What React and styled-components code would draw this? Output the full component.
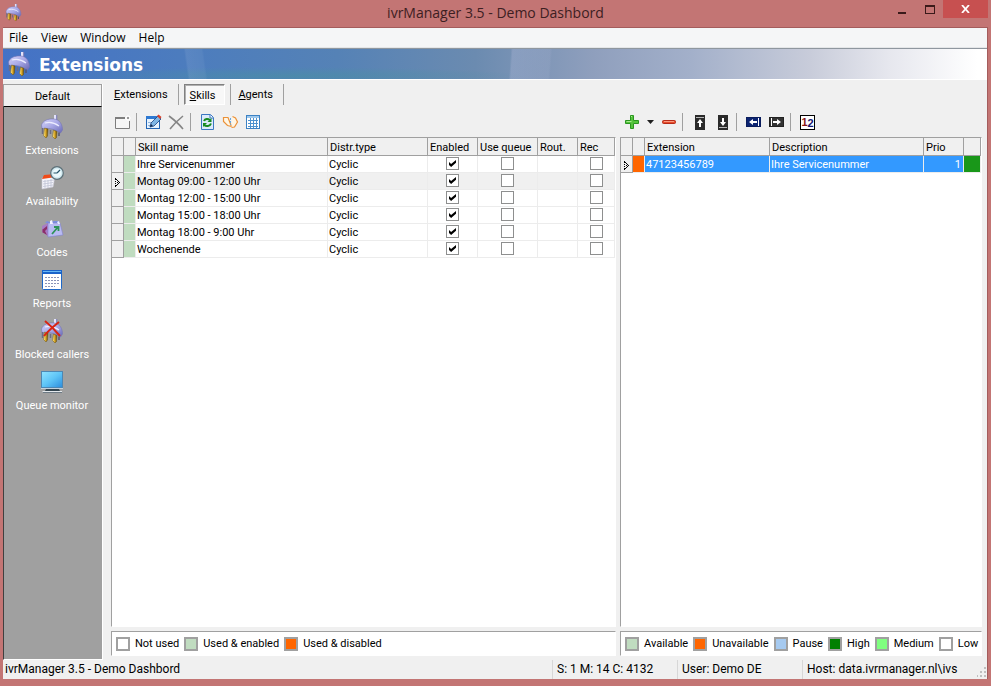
import React, { useState } from "react";
import styled, { createGlobalStyle, css } from "styled-components";

const GlobalStyle = createGlobalStyle`
  *,
  *::before {
    box-sizing: border-box;
  }

  body {
    margin: 0;
    font-family: Roboto, "Noto Sans", sans-serif;
    font-size: 11px;
    line-height: 14px;
    color: #000;
    background: #c37574;
  }

  button {
    padding: 0;
    border: none;
    background: none;
    font: inherit;
    color: inherit;
  }

  svg {
    display: block;
  }
`;

/* ---------- window frame ---------- */

const Window = styled.div`
  display: flex;
  flex-direction: column;
  min-height: 100vh;
  padding: 0 3px 7px;
`;

const TitleBar = styled.header`
  display: grid;
  grid-template-columns: 1fr auto 1fr;
  height: 28px;
  border-bottom: 1px solid #a45c5c;

  > svg {
    margin: 4px 2px;
  }
`;

const Title = styled.h1`
  margin: 0;
  font-family: "Open Sans", "Noto Sans", sans-serif;
  font-size: 14px;
  font-weight: 400;
  line-height: 26px;
  color: #3d2022;
`;

const WindowButtons = styled.div`
  display: flex;
  justify-content: flex-end;
`;

const WindowButton = styled.button`
  display: grid;
  place-items: center;
  width: ${(props) => (props.$close ? "45px" : "27px")};
  height: 18px;
  background: ${(props) => (props.$close ? "#c75050" : "none")};
`;

const Client = styled.div`
  flex: 1;
  display: flex;
  flex-direction: column;
  background: #f0f0f0;
  border-right: 1px solid #a45c5c;
`;

const MenuBar = styled.nav`
  display: flex;
  height: 20px;
  background: #f5f6f7;
  border-bottom: 1px solid #e4e6e8;
`;

const MenuButton = styled.button`
  padding: 1px 7px 0 6px;
  font-family: "Open Sans", "Noto Sans", sans-serif;
  font-size: 12px;
`;

const Banner = styled.div`
  display: flex;
  align-items: center;
  gap: 8px;
  height: 32px;
  padding-left: 4px;
  border-top: 1px solid #8f979f;
  border-bottom: 1px solid #fff;
  color: #fff;
  background:
    linear-gradient(82deg, transparent 18.7%, rgba(255, 255, 255, 0.08) 18.9%, rgba(255, 255, 255, 0.05) 20.5%, transparent 20.7%),
    linear-gradient(94deg, transparent 51.5%, rgba(205, 205, 235, 0.22) 51.7%, rgba(205, 205, 235, 0.1) 55.5%, transparent 55.7%),
    radial-gradient(ellipse at 29% 90%, rgba(72, 146, 160, 0.55), transparent 24%),
    linear-gradient(90deg, #4472c6 0%, #4d7dbd 20%, #5582b6 34%, #6b8bb0 48%, #8f9fbd 60%, #a3b0ca 70%, #c8ccda 82%, #e6e7ee 90%, #fff 99%);
`;

const BannerTitle = styled.h2`
  margin: 0;
  padding-top: 2px;
  font-family: "DejaVu Sans", Verdana, sans-serif;
  font-size: 17px;
  line-height: 24px;
`;

const Workspace = styled.div`
  flex: 1;
  display: flex;
  padding-top: 4px;
`;

/* ---------- sidebar ---------- */

const Sidebar = styled.aside`
  display: flex;
  flex-direction: column;
  flex: 0 0 100px;
  border-right: 1px solid #fff;
`;

const GroupButton = styled.button`
  height: 23px;
  padding-top: 2px;
  border: 1px solid #a0a0a0;
  border-bottom-color: #000;
  background: #f0f0f0;
`;

const SidebarItems = styled.nav`
  flex: 1;
  display: flex;
  flex-direction: column;
  gap: 8px;
  padding: 8px 2px 0 0;
  border-left: 1px solid #404040;
  border-bottom: 1px solid #fff;
  background: #a0a0a0;
`;

const SidebarButton = styled.button`
  display: flex;
  flex-direction: column;
  align-items: center;
  gap: 5px;
  color: #fff;
`;

/* ---------- main area ---------- */

const Main = styled.main`
  flex: 1;
  min-width: 0;
  display: flex;
  flex-direction: column;
  padding: 0 5px 4px 4px;
`;

const Tabs = styled.div`
  display: flex;
  height: 21px;
`;

const TabCell = styled.div`
  padding: 0 5px;
  border-right: 1px solid #a0a0a0;
`;

const Tab = styled.button`
  height: 21px;
  padding: 1px 5px 0 2px;

  ${(props) =>
    props.$active &&
    css`
      padding: 2px 9px 0 5px;
      border: 1px solid #fff;
      border-top-color: #808080;
      border-left-color: #808080;
      background: #f8f8f8;
      box-shadow: inset 1px 1px 0 #b0b0b0;
    `}
`;

const Panels = styled.div`
  flex: 1;
  display: grid;
  grid-template-columns: 505fr 362fr;
  gap: 4px;
  padding-left: 4px;
`;

const Panel = styled.section`
  display: flex;
  flex-direction: column;
  min-width: 0;
`;

const Toolbar = styled.div`
  display: flex;
  align-items: center;
  height: 32px;
  padding-top: 2px;
`;

const ToolButton = styled.button`
  display: grid;
  place-items: center;
  width: ${(props) => (props.$narrow ? "14px" : "23px")};
  height: 22px;
`;

const Separator = styled.span`
  width: 8px;
  height: 18px;
  border-left: 2px solid #f0f0f0;
  background: linear-gradient(90deg, #a0a0a0 1px, transparent 1px);
  background-clip: padding-box;
`;

const GridBox = styled.div`
  flex: 1;
  border: 1px solid #a0a0a0;
  border-right-color: #fff;
  border-bottom-color: #fff;
  background: #fff;
`;

const Grid = styled.table`
  width: 100%;
  table-layout: fixed;
  border-collapse: separate;
  border-spacing: 0;
`;

const Col = styled.col`
  width: ${(props) => (props.$width ? `${props.$width}px` : "auto")};
`;

const HeadCell = styled.th`
  height: 18px;
  padding: 2px 0 0 2px;
  border-right: 1px solid #a0a0a0;
  border-bottom: 1px solid #a0a0a0;
  background: #f0f0f0;
  font-weight: 400;
  text-align: left;
  white-space: nowrap;
`;

const Cell = styled.td`
  height: 17px;
  padding: 2px 2px 0 1px;
  border-right: 1px solid #ececec;
  border-bottom: 1px solid #ececec;
  text-align: ${(props) => props.$align || "left"};
  white-space: nowrap;
  overflow: hidden;
`;

const CheckCell = styled(Cell)`
  padding: 1px 1px 2px;
`;

const Row = styled.tr`
  background: ${(props) => (props.$selected ? "#3399ff" : props.$current ? "#f0f0f0" : "#fff")};
  color: ${(props) => (props.$selected ? "#fff" : "#000")};
`;

const IndicatorCell = styled(Cell)`
  padding-left: 2px;
  border-color: #a0a0a0;
  background: #f0f0f0;
`;

const ColorCell = styled(Cell)`
  background: ${(props) => props.$color};
`;

const Check = styled.input`
  appearance: none;
  display: block;
  width: 13px;
  height: 13px;
  margin: 0 auto;
  border: 1px solid #8e8f8f;
  background: #fff;

  &:checked::before {
    content: "";
    display: block;
    width: 7px;
    height: 7px;
    margin: 2px;
    background: #000;
    clip-path: polygon(0 30%, 30% 58%, 100% 0, 100% 38%, 30% 100%, 0 70%);
  }
`;

const Legend = styled.div`
  display: flex;
  align-items: center;
  gap: 5px;
  height: 25px;
  margin-top: 4px;
  padding-left: 4px;
  border: 1px solid #a0a0a0;
  border-right-color: #fff;
  border-bottom-color: #fff;
  background: #fff;
`;

const LegendItem = styled.span`
  display: flex;
  align-items: center;
  gap: 5px;
  white-space: nowrap;

  &::before {
    content: "";
    width: 14px;
    height: 14px;
    border: 2px solid #a0a0a0;
    background: ${(props) => props.$color};
  }
`;

const StatusBar = styled.footer`
  display: flex;
  height: 19px;
  font-size: 12px;
  line-height: 20px;
`;

const StatusCell = styled.span`
  flex: ${(props) => (props.$width ? `0 0 ${props.$width}px` : "1")};
  display: flex;
  justify-content: space-between;
  align-items: flex-end;
  padding-left: ${(props) => (props.$width ? "4px" : "2px")};
  border-left: ${(props) => (props.$width ? "1px solid #d7d7d7" : "none")};
  white-space: nowrap;
`;

/* ---------- icons ---------- */

const PlugIcon = ({ size = 24, blocked }) => (
  <svg width={size} height={size} viewBox="0 0 24 24">
    <defs>
      <linearGradient id="dome" x1="0" y1="0" x2="1" y2="1">
        <stop offset="0" stopColor="#d4d4fb" />
        <stop offset="0.5" stopColor="#a9a9e6" />
        <stop offset="1" stopColor="#6868b4" />
      </linearGradient>
      <linearGradient id="prong">
        <stop offset="0" stopColor="#fff0a0" />
        <stop offset="0.5" stopColor="#d9a520" />
        <stop offset="1" stopColor="#5e480c" />
      </linearGradient>
    </defs>
    <path d="M14 0h3v6h-3z" fill="#e4e4fa" />
    <path d="M16.2 0h1v6h-1z" fill="#7474b0" />
    <path d="M1.5 10C3 5.500 8 3.500 14 4c6 .5 8.500 6 8.500 11l-2 3c-4-2-7-4-12-4.500-3-.3-5 .5-6.500 0z" fill="url(#dome)" stroke="#7373b5" strokeWidth="0.6" />
    <path d="M5 8c5-1.500 10 0 14 3" fill="none" stroke="#ececff" strokeWidth="1.2" />
    <path d="M2.500 13v6" stroke="#6c6c84" strokeWidth="1.5" />
    <path d="M4.500 13l3.500 1-.5 7-1.500 2-2.500-2.500z" fill="url(#prong)" stroke="#6b5418" strokeWidth="0.5" />
    <path d="M10.500 15v4" stroke="#6c6c84" strokeWidth="1.5" />
    <path d="M13.500 15l3.500 1.500-.5 6-1.500 1.500-2.500-2.500z" fill="url(#prong)" stroke="#6b5418" strokeWidth="0.5" />
    <path d="M19 17.500v3.500" stroke="#55556e" strokeWidth="1.5" />
    {blocked && <path d="M5 2c5 4 10 9 15 15M19 3C14 7 8 12 4 17" fill="none" stroke="#d82414" strokeWidth="2" />}
  </svg>
);

const AvailabilityIcon = () => (
  <svg width="24" height="24" viewBox="0 0 24 24">
    <path d="M2 12l13-2-2 11-11 2z" fill="#f5f5fb" stroke="#c9c9d6" strokeWidth="0.6" />
    <path d="M4 9l11-1 1 3-14 2z" fill="#f04a18" />
    <path d="M3 15.500l11-1.500M3 18l10-1.500M3 20.500l10-1.500M5 14v8M8 14v8M11 13v8" stroke="#b9bdd0" strokeWidth="0.7" />
    <circle cx="17" cy="7" r="6.3" fill="#cfe8ef" stroke="#5d7078" strokeWidth="1.2" />
    <circle cx="17" cy="7" r="4.3" fill="#eaf8fb" />
    <path d="M17 7l3-3M17 7h-3.500" stroke="#27566b" strokeWidth="1.2" />
  </svg>
);

const CodesIcon = () => (
  <svg width="24" height="24" viewBox="0 0 24 24">
    <path d="M5 6l2-2 3 1 4-1h5l1 3z" fill="#7b8ee0" />
    <path d="M2 9l6-3v13l-6-4z" fill="#a87cc4" />
    <path d="M8 6h12l3 12-15 2z" fill="#b9bbf2" stroke="#7f82cc" strokeWidth="0.6" />
    <path d="M10 4l2-1 1 4h-3z" fill="#f2f2ff" />
    <path d="M17 5l2-1 1 3h-2z" fill="#e8ecff" />
    <path d="M2 13l5-4v3l-2 2 2 4-5-3 1-1z" fill="#8b2f68" />
    <path d="M12 17l6-7M14 10h4.500v4" fill="none" stroke="#2f9358" strokeWidth="1.8" />
  </svg>
);

const ReportsIcon = () => (
  <svg width="24" height="24" viewBox="0 0 24 24">
    <rect x="2.5" y="2.5" width="19" height="19" rx="1" fill="#fff" stroke="#1e68c8" />
    <path d="M2 2h20v4H2z" fill="#1a63ca" />
    <path d="M3 3h18v1H3z" fill="#68b8f5" />
    <path d="M5 9.500h14M5 12.500h14M5 15.500h14M5 18.500h10" stroke="#8a93b8" strokeDasharray="2 1" />
  </svg>
);

const MonitorIcon = () => (
  <svg width="24" height="24" viewBox="0 0 24 24">
    <defs>
      <linearGradient id="screen" x1="0" y1="0" x2="1" y2="1">
        <stop offset="0" stopColor="#8fe2ff" />
        <stop offset="0.5" stopColor="#5ec5f7" />
        <stop offset="1" stopColor="#2e8fde" />
      </linearGradient>
    </defs>
    <path d="M1 1h22v18H1z" fill="#4d87b3" />
    <path d="M2 2h20v15H2z" fill="url(#screen)" />
    <path d="M1 18h22v1H1z" fill="#c4d2dc" />
    <path d="M6 19h13l1 2H5z" fill="#34454f" />
    <path d="M3 21h19v1H2z" fill="#e3e8ec" />
    <path d="M3 22h19v1H3z" fill="#6d7a84" />
  </svg>
);

const NewIcon = () => (
  <svg width="17" height="16" viewBox="0 0 17 16">
    <path d="M11 3.500H1.500v11h14V7" fill="#f6f6f6" stroke="#7d7d7d" />
    <path d="M1 3h10v2H1z" fill="#7d7d7d" />
    <path d="M14 1v6M11 4h6M12 2l4 4M16 2l-4 4" stroke="#fff" />
    <path d="M13 3h2v2h-2z" fill="#999" />
  </svg>
);

const EditIcon = () => (
  <svg width="17" height="16" viewBox="0 0 17 16">
    <rect x="1.5" y="2.5" width="13" height="12" fill="#e6f3ff" stroke="#2466b5" />
    <path d="M1 2h14v3H1z" fill="#2e79d2" />
    <path d="M3 8.500h5M3 11.500h3" stroke="#92b6df" />
    <path d="M5 13l1-4 7-7 3 3-7 7z" fill="#7fb6e5" stroke="#153f7c" strokeWidth="0.8" />
    <path d="M12 2l1.500-1.500 3 2.500L15 5z" fill="#d8402a" />
    <path d="M5 13l1-3 2 2z" fill="#142b50" />
  </svg>
);

const DeleteIcon = () => (
  <svg width="17" height="16" viewBox="0 0 17 16">
    <path d="M1 2c4 3 10 8 14 13M15 2C10 6 6 10 2 15" fill="none" stroke="#858585" strokeWidth="1.6" />
  </svg>
);

const RefreshIcon = () => (
  <svg width="17" height="16" viewBox="0 0 17 16">
    <path d="M2.500.5h9l3 3v12h-12z" fill="#dcebfc" stroke="#3c78c2" />
    <path d="M11 1v3h3" fill="#fff" stroke="#3c78c2" />
    <path d="M5 7C6 4.500 9 4.500 11 6M12 9.500c-1 3-5 3-7 1.500" fill="none" stroke="#188a20" strokeWidth="2" />
    <path d="M12.500 4v4h-4zM4 13V9h4z" fill="#188a20" />
  </svg>
);

const BookIcon = () => (
  <svg width="17" height="16" viewBox="0 0 17 16">
    <path d="M1.500 3.500l4.500 0 3.500 9-4-1-4-4z" fill="#fff6e5" stroke="#eb9138" strokeWidth="1.2" />
    <path d="M10.500 2.500l3 1.500 2 4-3 5-3 .5" fill="#fff6e5" stroke="#eb9138" strokeWidth="1.2" />
    <path d="M8.500 4v7" stroke="#69a7de" strokeDasharray="2 1" />
  </svg>
);

const TableIcon = () => (
  <svg width="17" height="16" viewBox="0 0 17 16">
    <rect x="1.5" y="1.5" width="13" height="13" fill="#fff" stroke="#3c82c4" />
    <path d="M2 3h12" stroke="#9dc7ec" strokeWidth="2" />
    <path d="M3 6.500h10M3 9.500h10M3 12.500h10M5.500 4v10M8.500 4v10M11.500 4v10" stroke="#4f92ce" />
  </svg>
);

const PlusIcon = () => (
  <svg width="16" height="16" viewBox="0 0 16 16">
    <path d="M6.500 1.500h3v5h5v3h-5v5h-3v-5h-5v-3h5z" fill="#54c43c" stroke="#2b9620" />
    <path d="M7 2.500h1M2.500 7.500h5" stroke="#aaea92" />
  </svg>
);

const DropIcon = () => (
  <svg width="7" height="4" viewBox="0 0 7 4">
    <path d="M0 0h7L3.500 4z" fill="#202020" />
  </svg>
);

const MinusIcon = () => (
  <svg width="16" height="16" viewBox="0 0 16 16">
    <rect x="1.5" y="6.5" width="13" height="3" rx="1" fill="#e84c2c" stroke="#b52b18" />
    <path d="M3 7.500h10" stroke="#fa9a80" />
  </svg>
);

const MoveIcon = ({ down }) => (
  <svg width="10" height="15" viewBox="0 0 10 15">
    <path d="M0 0h10v15H0z" fill="#2a2a2a" />
    <path d={down ? "M1 12h8v1H1z" : "M1 2h8v1H1z"} fill="#b8b8b8" />
    <path d={down ? "M4 3h2v4h2l-3 4-3-4h2z" : "M4 12h2V8h2L5 4 2 8h2z"} fill="#fff" />
  </svg>
);

const AssignIcon = ({ right }) => (
  <svg width="15" height="12" viewBox="0 0 15 12">
    <rect x="0.5" y="1.5" width="14" height="9" fill={right ? "#333" : "#0c2472"} stroke={right ? "#222" : "#0a1c5c"} />
    <path d={right ? "M2 2h1v8H2z" : "M12 2h1v8h-1z"} fill="#fff" />
    <path d={right ? "M4 5h4V3l4 3-4 3V7H4z" : "M11 5H7V3L3 6l4 3V7h4z"} fill="#fff" />
  </svg>
);

const NumberBadge = styled.span`
  display: flex;
  justify-content: center;
  width: 15px;
  height: 15px;
  border: 1px solid #000;
  background: #fff;
  font-family: "Liberation Sans", Arial, sans-serif;
  font-size: 11px;
  font-weight: 700;
  line-height: 15px;
  color: #14146e;

  b {
    line-height: 12px;
    color: #8a1515;
  }
`;

const RowMarker = () => (
  <svg width="7" height="9" viewBox="0 0 7 9">
    <path d="M1 0h1v2H1zM1 3h1v1H1zM1 5h1v1H1zM1 7h1v2H1zM2 1h1v1H2zM3 2h1v1H3zM4 3h1v1H4zM5 4h1v1H5zM4 5h1v1H4zM3 6h1v1H3zM2 7h1v1H2zM3 4h1v1H3z" fill="#000" />
  </svg>
);

const GripIcon = () => (
  <svg width="10" height="12" viewBox="0 0 10 12">
    <path d="M7 0h2v2H7zM7 4h2v2H7zM3 4h2v2H3zM7 8h2v2H7zM3 8h2v2H3zM-1 8h2v2h-2z" fill="#bfbfbf" />
  </svg>
);

/* ---------- data ---------- */

const sidebarItems = [
  { label: "Extensions", icon: <PlugIcon /> },
  { label: "Availability", icon: <AvailabilityIcon /> },
  { label: "Codes", icon: <CodesIcon /> },
  { label: "Reports", icon: <ReportsIcon /> },
  { label: "Blocked callers", icon: <PlugIcon blocked /> },
  { label: "Queue monitor", icon: <MonitorIcon /> },
];

const tabs = ["Extensions", "Skills", "Agents"];

const skills = [
  "Ihre Servicenummer",
  "Montag 09:00 - 12:00 Uhr",
  "Montag 12:00 - 15:00 Uhr",
  "Montag 15:00 - 18:00 Uhr",
  "Montag 18:00 - 9:00 Uhr",
  "Wochenende",
];

const skillLegend = [
  ["Not used", "#fff"],
  ["Used & enabled", "#c0dcc0"],
  ["Used & disabled", "#ff6600"],
];

const extensionLegend = [
  ["Available", "#c0dcc0"],
  ["Unavailable", "#ff6600"],
  ["Pause", "#a6caf0"],
  ["High", "#008000"],
  ["Medium", "#80ff80"],
  ["Low", "#fff"],
];

const LegendBar = ({ items }) => (
  <Legend>
    {items.map(([label, color]) => (
      <LegendItem key={label} $color={color}>
        {label}
      </LegendItem>
    ))}
  </Legend>
);

const SkillsPanel = () => {
  const [current, setCurrent] = useState(1);

  return (
    <Panel>
      <Toolbar>
        <ToolButton aria-label="New"><NewIcon /></ToolButton>
        <Separator />
        <ToolButton aria-label="Edit"><EditIcon /></ToolButton>
        <ToolButton aria-label="Delete"><DeleteIcon /></ToolButton>
        <Separator />
        <ToolButton aria-label="Refresh"><RefreshIcon /></ToolButton>
        <ToolButton aria-label="Log"><BookIcon /></ToolButton>
        <ToolButton aria-label="Table"><TableIcon /></ToolButton>
      </Toolbar>

      <GridBox>
        <Grid>
          <colgroup>
            <Col $width={12} />
            <Col $width={12} />
            <Col />
            <Col $width={100} />
            <Col $width={50} />
            <Col $width={60} />
            <Col $width={40} />
            <Col $width={37} />
          </colgroup>
          <thead>
            <tr>
              <HeadCell />
              <HeadCell />
              <HeadCell>Skill name</HeadCell>
              <HeadCell>Distr.type</HeadCell>
              <HeadCell>Enabled</HeadCell>
              <HeadCell>Use queue</HeadCell>
              <HeadCell>Rout.</HeadCell>
              <HeadCell>Rec</HeadCell>
            </tr>
          </thead>
          <tbody>
            {skills.map((name, index) => (
              <Row key={name} $current={index === current} onClick={() => setCurrent(index)}>
                <IndicatorCell>{index === current && <RowMarker />}</IndicatorCell>
                <ColorCell $color="#c0dcc0" />
                <Cell>{name}</Cell>
                <Cell>Cyclic</Cell>
                <CheckCell><Check type="checkbox" defaultChecked aria-label={`${name} enabled`} /></CheckCell>
                <CheckCell><Check type="checkbox" aria-label={`${name} use queue`} /></CheckCell>
                <Cell />
                <CheckCell><Check type="checkbox" aria-label={`${name} rec`} /></CheckCell>
              </Row>
            ))}
          </tbody>
        </Grid>
      </GridBox>

      <LegendBar items={skillLegend} />
    </Panel>
  );
};

const ExtensionsPanel = () => (
  <Panel>
    <Toolbar>
      <ToolButton aria-label="Add"><PlusIcon /></ToolButton>
      <ToolButton $narrow aria-label="Add options"><DropIcon /></ToolButton>
      <ToolButton aria-label="Remove"><MinusIcon /></ToolButton>
      <Separator />
      <ToolButton aria-label="Move up"><MoveIcon /></ToolButton>
      <ToolButton aria-label="Move down"><MoveIcon down /></ToolButton>
      <Separator />
      <ToolButton aria-label="Assign"><AssignIcon /></ToolButton>
      <ToolButton aria-label="Unassign"><AssignIcon right /></ToolButton>
      <Separator />
      <ToolButton aria-label="Priority"><NumberBadge><b>1</b>2</NumberBadge></ToolButton>
    </Toolbar>

    <GridBox>
      <Grid>
        <colgroup>
          <Col $width={12} />
          <Col $width={12} />
          <Col $width={125} />
          <Col />
          <Col $width={40} />
          <Col $width={17} />
        </colgroup>
        <thead>
          <tr>
            <HeadCell />
            <HeadCell />
            <HeadCell>Extension</HeadCell>
            <HeadCell>Description</HeadCell>
            <HeadCell>Prio</HeadCell>
            <HeadCell />
          </tr>
        </thead>
        <tbody>
          <Row $selected>
            <IndicatorCell><RowMarker /></IndicatorCell>
            <ColorCell $color="#ff6600" />
            <Cell>47123456789</Cell>
            <Cell>Ihre Servicenummer</Cell>
            <Cell $align="right">1</Cell>
            <ColorCell $color="#199719" />
          </Row>
        </tbody>
      </Grid>
    </GridBox>

    <LegendBar items={extensionLegend} />
  </Panel>
);

const App = () => {
  const [activeTab, setActiveTab] = useState("Skills");

  return (
    <Window>
      <GlobalStyle />

      <TitleBar>
        <PlugIcon size={17} />
        <Title>ivrManager 3.5 - Demo Dashbord</Title>
        <WindowButtons>
          <WindowButton aria-label="Minimize">
            <svg width="9" height="9"><path d="M0 7h8v2H0z" fill="#3a1a1a" /></svg>
          </WindowButton>
          <WindowButton aria-label="Maximize">
            <svg width="10" height="9"><path d="M0 0h10v9H0zM1 2v6h8V2z" fill="#3a1a1a" fillRule="evenodd" /></svg>
          </WindowButton>
          <WindowButton $close aria-label="Close">
            <svg width="9" height="8"><path d="M1 0l7 8M8 0L1 8" stroke="#fff" strokeWidth="1.8" /></svg>
          </WindowButton>
        </WindowButtons>
      </TitleBar>

      <Client>
        <MenuBar>
          {["File", "View", "Window", "Help"].map((item) => (
            <MenuButton key={item}>{item}</MenuButton>
          ))}
        </MenuBar>

        <Banner>
          <PlugIcon size={24} />
          <BannerTitle>Extensions</BannerTitle>
        </Banner>

        <Workspace>
          <Sidebar>
            <GroupButton>Default</GroupButton>
            <SidebarItems>
              {sidebarItems.map(({ label, icon }) => (
                <SidebarButton key={label}>
                  {icon}
                  {label}
                </SidebarButton>
              ))}
            </SidebarItems>
          </Sidebar>

          <Main>
            <Tabs>
              {tabs.map((tab) => (
                <TabCell key={tab}>
                  <Tab $active={tab === activeTab} onClick={() => setActiveTab(tab)}>
                    <u>{tab[0]}</u>
                    {tab.slice(1)}
                  </Tab>
                </TabCell>
              ))}
            </Tabs>

            <Panels>
              <SkillsPanel />
              <ExtensionsPanel />
            </Panels>
          </Main>
        </Workspace>

        <StatusBar>
          <StatusCell>ivrManager 3.5 - Demo Dashbord</StatusCell>
          <StatusCell $width={125}>S: 1 M: 14 C: 4132</StatusCell>
          <StatusCell $width={125}>User: Demo DE</StatusCell>
          <StatusCell $width={185}>
            Host: data.ivrmanager.nl\ivs
            <GripIcon />
          </StatusCell>
        </StatusBar>
      </Client>
    </Window>
  );
};

export default App;
